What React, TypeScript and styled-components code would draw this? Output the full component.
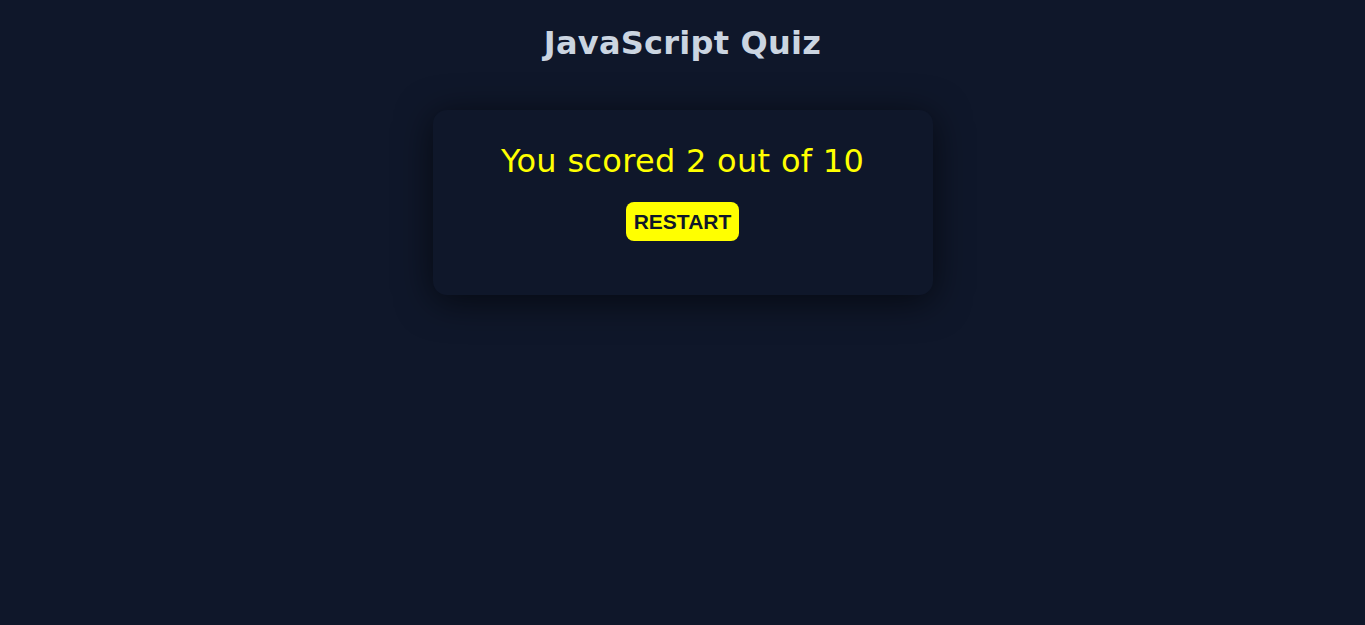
import React from "react";
import styled, { createGlobalStyle } from "styled-components";

const Global = createGlobalStyle`
  html, body { margin: 0; padding: 0; background: #0f172a; }
  body { font-family: "DejaVu Sans", Verdana, sans-serif; min-height: 625px; }
`;

const Page = styled.div`
  display: flex;
  flex-direction: column;
  align-items: center;
  padding-top: 23px;
`;

const Title = styled.h1`
  margin: 0;
  font-family: "DejaVu Sans", Verdana, sans-serif;
  font-size: 32px;
  font-weight: 700;
  letter-spacing: 0.25px;
  color: #cbd5e1;
  line-height: 40px;
`;

const Card = styled.div`
  margin-top: 47px;
  width: 500px;
  box-sizing: border-box;
  padding: 31px 20px 54px;
  background: #0f172a;
  border-radius: 14px;
  box-shadow: 0 6px 36px rgba(0, 0, 0, 0.6);
  display: flex;
  flex-direction: column;
  align-items: center;
`;

const Score = styled.div`
  font-family: "DejaVu Sans", Verdana, sans-serif;
  font-size: 32px;
  letter-spacing: 0.3px;
  color: #ffff00;
  line-height: 40px;
`;

const Button = styled.button`
  margin-top: 21px;
  height: 39px;
  padding: 0 8px;
  border: none;
  border-radius: 8px;
  background: #ffff00;
  color: #0f172a;
  font-family: "Liberation Sans", Arial, sans-serif;
  font-weight: 700;
  font-size: 21px;
  cursor: pointer;
`;

export default function App() {
  return (
    <>
      <Global />
      <Page>
        <Title>JavaScript Quiz</Title>
        <Card>
          <Score>You scored 2 out of 10</Score>
          <Button>RESTART</Button>
        </Card>
      </Page>
    </>
  );
}
